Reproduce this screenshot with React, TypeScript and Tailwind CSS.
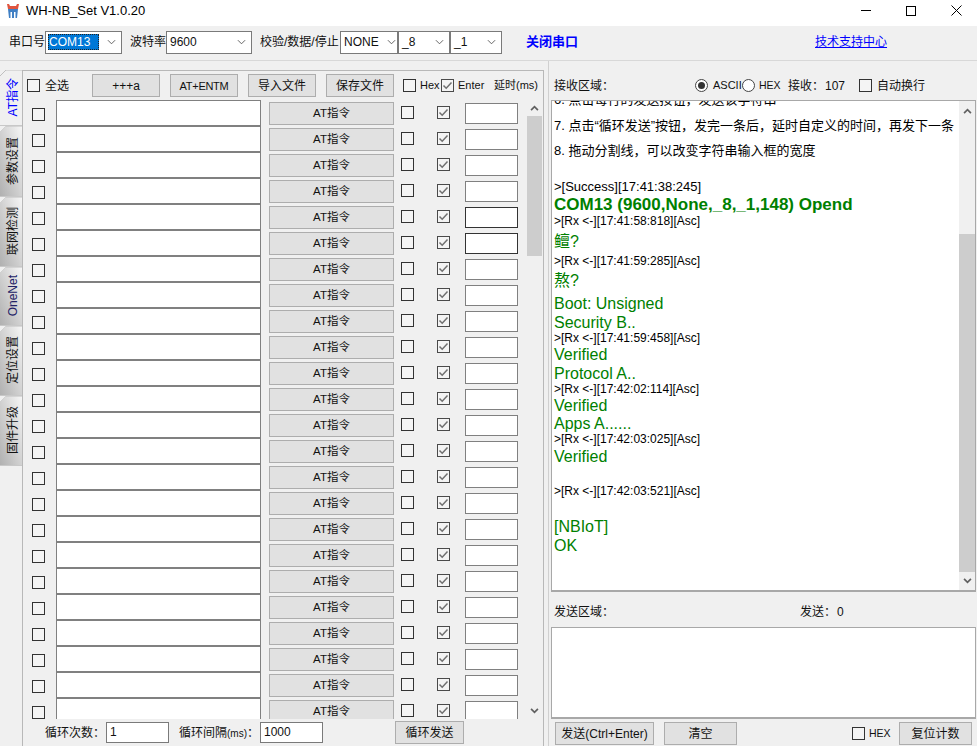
import React from 'react'

const Check = ({ on = false, className = '' }: { on?: boolean; className?: string }) => (
  <span className={`block w-[13px] h-[13px] shrink-0 border ${on ? 'border-[#4a4a4a]' : 'border-[#333]'} bg-[#f4f4f4] ${className}`}>
    {on && (
      <svg viewBox="0 0 11 11" className="w-[11px] h-[11px]">
        <path d="M1.5 5.5 L4.2 8.2 L9.5 2.5" fill="none" stroke="#707070" strokeWidth="1.5" />
      </svg>
    )}
  </span>
)

const Btn = ({ className = '', children }: { className?: string; children: React.ReactNode }) => (
  <div className={`flex items-center justify-center h-[23px] shrink-0 pt-px border border-[#adadad] bg-[#e1e1e1] text-[#111] ${className}`}>
    {children}
  </div>
)

const Combo = ({ value, className = '', selected = false }: { value: string; className?: string; selected?: boolean }) => (
  <div className={`flex items-center h-[23px] shrink-0 border border-[#7a7a7a] bg-white pl-[2px] pr-[5px] ${className}`}>
    {selected ? (
      <span className="block flex-1 h-[16px] leading-[15px] bg-[#0078d7] text-white border border-dotted border-[#222]">{value}</span>
    ) : (
      <span className="flex-1 pl-[1px]">{value}</span>
    )}
    <svg viewBox="0 0 10 6" className="w-[9px] h-[6px] ml-[8px] shrink-0">
      <path d="M1 1 L5 5 L9 1" fill="none" stroke="#555" strokeWidth="1" />
    </svg>
  </div>
)

const Arrow = ({ up = false, className = '' }: { up?: boolean; className?: string }) => (
  <svg viewBox="0 0 10 7" className={`w-[9px] h-[6px] ${className}`}>
    <path d={up ? 'M1 6 L5 2 L9 6' : 'M1 1 L5 5 L9 1'} fill="none" stroke="#606060" strokeWidth="2" />
  </svg>
)

const tabs = [
  { label: 'AT指令', h: 'h-[56px]', cls: 'text-[#0000ff]', active: true },
  { label: '参数设置', h: 'h-[71px]', cls: '' },
  { label: '联网检测', h: 'h-[70px]', cls: '' },
  { label: 'OneNet', h: 'h-[59px]', cls: 'text-[#222266]' },
  { label: '定位设置', h: 'h-[70px]', cls: '' },
  { label: '固件升级', h: 'h-[70px]', cls: '' },
]

const rows = Array.from({ length: 24 }, (_, i) => i)

const logLines = [
  { t: '6. 点击每行的发送按钮，发送该字符串', c: 'h-[25px] leading-[23px] text-[13px] text-black' },
  { t: '7. 点击“循环发送”按钮，发完一条后，延时自定义的时间，再发下一条', c: 'h-[25px] leading-[25px] text-[13px] text-black' },
  { t: '8. 拖动分割线，可以改变字符串输入框的宽度', c: 'h-[25px] leading-[25px] text-[13px] text-black' },
  { t: '', c: 'h-[15px]' },
  { t: '>[Success][17:41:38:245]', c: 'h-[17px] leading-[17px] text-[13px] text-black' },
  { t: 'COM13 (9600,None,_8,_1,148) Opend', c: 'h-[18px] pt-px leading-[18px] text-[17px] font-bold text-[#008000]' },
  { t: '>[Rx <-][17:41:58:818][Asc]', c: 'h-[16px] leading-[16px] text-[12px] text-black' },
  { t: '鳣?', c: 'h-[22px] pt-[2px] leading-[22px] text-[16px] text-[#008000]' },
  { t: '>[Rx <-][17:41:59:285][Asc]', c: 'h-[18px] pt-px leading-[18px] text-[12px] text-black' },
  { t: '熬?', c: 'h-[22px] pt-px leading-[22px] text-[16px] text-[#008000]' },
  { t: '', c: 'h-[2px]' },
  { t: 'Boot: Unsigned', c: 'h-[20px] pt-px leading-[20px] text-[16px] text-[#008000]' },
  { t: 'Security B..', c: 'h-[18px] pt-px leading-[18px] text-[16px] text-[#008000]' },
  { t: '>[Rx <-][17:41:59:458][Asc]', c: 'h-[14px] leading-[14px] text-[12px] text-black' },
  { t: 'Verified', c: 'h-[18px] pt-px leading-[18px] text-[16px] text-[#008000]' },
  { t: 'Protocol A..', c: 'h-[19px] pt-px leading-[19px] text-[16px] text-[#008000]' },
  { t: '>[Rx <-][17:42:02:114][Asc]', c: 'h-[14px] leading-[14px] text-[12px] text-black' },
  { t: 'Verified', c: 'h-[18px] pt-px leading-[18px] text-[16px] text-[#008000]' },
  { t: 'Apps A......', c: 'h-[18px] pt-px leading-[18px] text-[16px] text-[#008000]' },
  { t: '>[Rx <-][17:42:03:025][Asc]', c: 'h-[15px] leading-[15px] text-[12px] text-black' },
  { t: 'Verified', c: 'h-[18px] pt-px leading-[18px] text-[16px] text-[#008000]' },
  { t: '', c: 'h-[19px]' },
  { t: '>[Rx <-][17:42:03:521][Asc]', c: 'h-[14px] leading-[14px] text-[12px] text-black' },
  { t: '', c: 'h-[18px]' },
  { t: '[NBIoT]', c: 'h-[20px] pt-px leading-[20px] text-[16px] text-[#008000]' },
  { t: 'OK', c: 'h-[18px] pt-px leading-[18px] text-[16px] text-[#008000]' },
]

export default function App() {
  return (
    <div className="w-[977px] h-[746px] overflow-hidden flex flex-col bg-[#f0f0f0] text-[12px] text-[#111] font-['Liberation_Sans','Noto_Sans_CJK_SC',sans-serif]">
      {/* title bar */}
      <div className="h-[26px] shrink-0 flex items-center bg-white">
        <svg viewBox="0 0 12 14" className="w-[12px] h-[14px] ml-[7px] -mt-[5px]">
          <path d="M0 0 L2 0 L3 2 L9 2 L10 0 L12 0 L11 5 L1 5 Z" fill="#e0553f" />
          <path d="M1 5 H11 L10 14 H8.5 V8 H7 V14 H5 V8 H3.5 V14 H2 Z" fill="#3f7fc4" />
        </svg>
        <span className="ml-[7px] -mt-[5px] text-[13px] text-black">WH-NB_Set V1.0.20</span>
        <div className="ml-auto flex items-center -mt-[5px]">
          <span className="block w-[10px] h-px bg-black mr-[35px]" />
          <span className="block w-[10px] h-[10px] border border-black mr-[35px]" />
          <svg viewBox="0 0 11 11" className="w-[11px] h-[11px] mr-[15px]">
            <path d="M0.5 0.5 L10.5 10.5 M10.5 0.5 L0.5 10.5" stroke="#000" strokeWidth="1" />
          </svg>
        </div>
      </div>

      {/* toolbar */}
      <div className="h-[35px] shrink-0 flex items-center border-b border-[#d8d8d8] pb-[2px]">
        <span className="ml-[9px] w-[36px]">串口号</span>
        <Combo value="COM13" selected className="w-[77px]" />
        <span className="ml-[8px] w-[36px]">波特率</span>
        <Combo value="9600" className="w-[86px]" />
        <span className="ml-[8px] w-[80px] whitespace-nowrap">校验/数据/停止</span>
        <Combo value="NONE" className="w-[58px]" />
        <Combo value="_8" className="w-[52px]" />
        <Combo value="_1" className="w-[52px]" />
        <span className="ml-[24px] text-[13px] font-bold text-[#0000ff]">关闭串口</span>
        <span className="ml-[237px] text-[#0000ff] underline">技术支持中心</span>
      </div>

      <div className="flex-1 min-h-0 flex">
        {/* left side: vertical tabs + pane */}
        <div className="w-[548px] shrink-0 flex pt-[9px] pr-[4px]">
          <div className="w-[22px] shrink-0 flex flex-col">
            {tabs.map((t) => (
              <div
                key={t.label}
                className={`relative ${t.h} shrink-0 flex items-center justify-center pl-[4px] border-b border-[#c8c8c8] ${t.active ? '' : 'bg-linear-to-bl from-[#f6f6f6] to-[#b0b0b0] [clip-path:polygon(6px_0,100%_0,100%_100%,0_100%,0_6px)]'} ${t.cls}`}
              >
                <svg viewBox="0 0 22 6" className="absolute top-0 left-0 w-[22px] h-[6px]">
                  <path d="M0 6 L6 0 H22" fill="none" stroke="#c0c0c0" strokeWidth="1" />
                </svg>
                <span className="[writing-mode:vertical-rl] [text-orientation:sideways] rotate-180 whitespace-nowrap">{t.label}</span>
              </div>
            ))}
          </div>

          <div className="flex-1 min-w-0 flex flex-col border-t border-x border-[#b8b8b8]">
            {/* header row */}
            <div className="h-[29px] shrink-0 flex items-center">
              <Check className="ml-[4px]" />
              <span className="ml-[5px] w-[24px]">全选</span>
              <Btn className="ml-[23px] w-[68px]">+++a</Btn>
              <Btn className="ml-[10px] w-[68px] text-[11px] tracking-tight">AT+ENTM</Btn>
              <Btn className="ml-[10px] w-[68px]">导入文件</Btn>
              <Btn className="ml-[10px] w-[68px]">保存文件</Btn>
              <Check className="ml-[9px]" />
              <span className="ml-[4px] w-[21px] text-[11px]">Hex</span>
              <Check on />
              <span className="ml-[4px] w-[36px] text-[11px]">Enter</span>
              <span className="text-[11px] whitespace-nowrap">延时(ms)</span>
            </div>

            {/* command rows */}
            <div className="h-[619px] shrink-0 flex overflow-hidden">
              <div className="w-[504px] shrink-0 flex flex-col">
                {rows.map((i) => (
                  <div key={i} className="h-[26px] shrink-0 flex items-center">
                    <Check className="ml-[9px] mt-[3px]" />
                    <div className="ml-[11px] w-[205px] h-[26px] shrink-0 border border-[#808080] bg-white" />
                    <Btn className="ml-[8px] w-[125px] text-[11.5px]">AT指令</Btn>
                    <Check className="ml-[7px] -mt-[2px]" />
                    <Check on className="ml-[23px] -mt-[2px]" />
                    <div className={`ml-[15px] w-[53px] h-[21px] shrink-0 border bg-white ${i === 4 || i === 5 ? 'border-[#333]' : 'border-[#808080]'}`} />
                  </div>
                ))}
              </div>
              <div className="w-[15px] shrink-0 flex flex-col items-center bg-[#f0f0f0]">
                <div className="h-[16px] shrink-0 flex items-center justify-center"><Arrow up /></div>
                <div className="w-full h-[140px] shrink-0 bg-[#cdcdcd]" />
                <div className="flex-1" />
                <div className="h-[16px] shrink-0 flex items-center justify-center"><Arrow /></div>
              </div>
            </div>

            {/* loop settings */}
            <div className="flex-1 min-h-0 flex items-center">
              <span className="ml-[22px] w-[61px]">循环次数：</span>
              <div className="w-[63px] h-[21px] border border-[#7a7a7a] bg-white pl-[3px] leading-[19px]">1</div>
              <span className="ml-[10px] w-[81px] whitespace-nowrap">循环间隔<span className="text-[10px]">(ms)</span>：</span>
              <div className="w-[63px] h-[21px] border border-[#7a7a7a] bg-white pl-[3px] leading-[19px]">1000</div>
              <Btn className="ml-[72px] w-[69px]">循环发送</Btn>
            </div>
          </div>
        </div>

        {/* right side */}
        <div className="flex-1 min-w-0 flex flex-col border-l border-[#d0d0d0] pl-[2px] pr-[1px]">
          <div className="h-[39px] shrink-0 flex items-center pt-[10px]">
            <span className="ml-[3px] w-[141px]">接收区域：</span>
            <span className="block w-[13px] h-[13px] rounded-full border border-[#444] bg-white p-[2px]"><span className="block w-full h-full rounded-full bg-[#333]" /></span>
            <span className="ml-[5px] w-[29px] text-[11px]">ASCII</span>
            <span className="block w-[13px] h-[13px] rounded-full border border-[#444] bg-white" />
            <span className="ml-[4px] w-[29px] text-[10.5px]">HEX</span>
            <span className="w-[37px]">接收：</span>
            <span className="w-[34px]">107</span>
            <Check />
            <span className="ml-[5px]">自动换行</span>
          </div>

          <div className="h-[492px] shrink-0 flex border-t border-x border-b-2 border-[#a8a8a8] bg-white">
            <div className="flex-1 min-w-0 overflow-hidden pl-[2px]">
              <div className="-mt-[13px] whitespace-nowrap">
                {logLines.map((l, i) => (
                  <div key={i} className={l.c}>{l.t}</div>
                ))}
              </div>
            </div>
            <div className="w-[16px] shrink-0 flex flex-col items-center bg-[#f0f0f0]">
              <div className="h-[20px] shrink-0 flex items-center justify-center"><Arrow up /></div>
              <div className="h-[113px] shrink-0" />
              <div className="w-full flex-1 bg-[#cdcdcd]" />
              <div className="h-[18px] shrink-0 flex items-center justify-center"><Arrow /></div>
            </div>
          </div>

          <div className="h-[35px] shrink-0 flex items-center pt-[5px]">
            <span className="ml-[3px] w-[246px]">发送区域：</span>
            <span className="w-[37px]">发送：</span>
            <span>0</span>
          </div>
          <div className="h-[92px] shrink-0 border-t border-x border-b-2 border-[#a8a8a8] bg-white" />
          <div className="flex-1 min-h-0 flex items-center pt-[2px]">
            <Btn className="ml-[4px] w-[99px]">发送(Ctrl+Enter)</Btn>
            <Btn className="ml-[10px] w-[73px]">清空</Btn>
            <Check className="ml-[115px]" />
            <span className="ml-[4px] w-[30px] text-[10.5px]">HEX</span>
            <Btn className="w-[73px]">复位计数</Btn>
          </div>
        </div>
      </div>
    </div>
  )
}
